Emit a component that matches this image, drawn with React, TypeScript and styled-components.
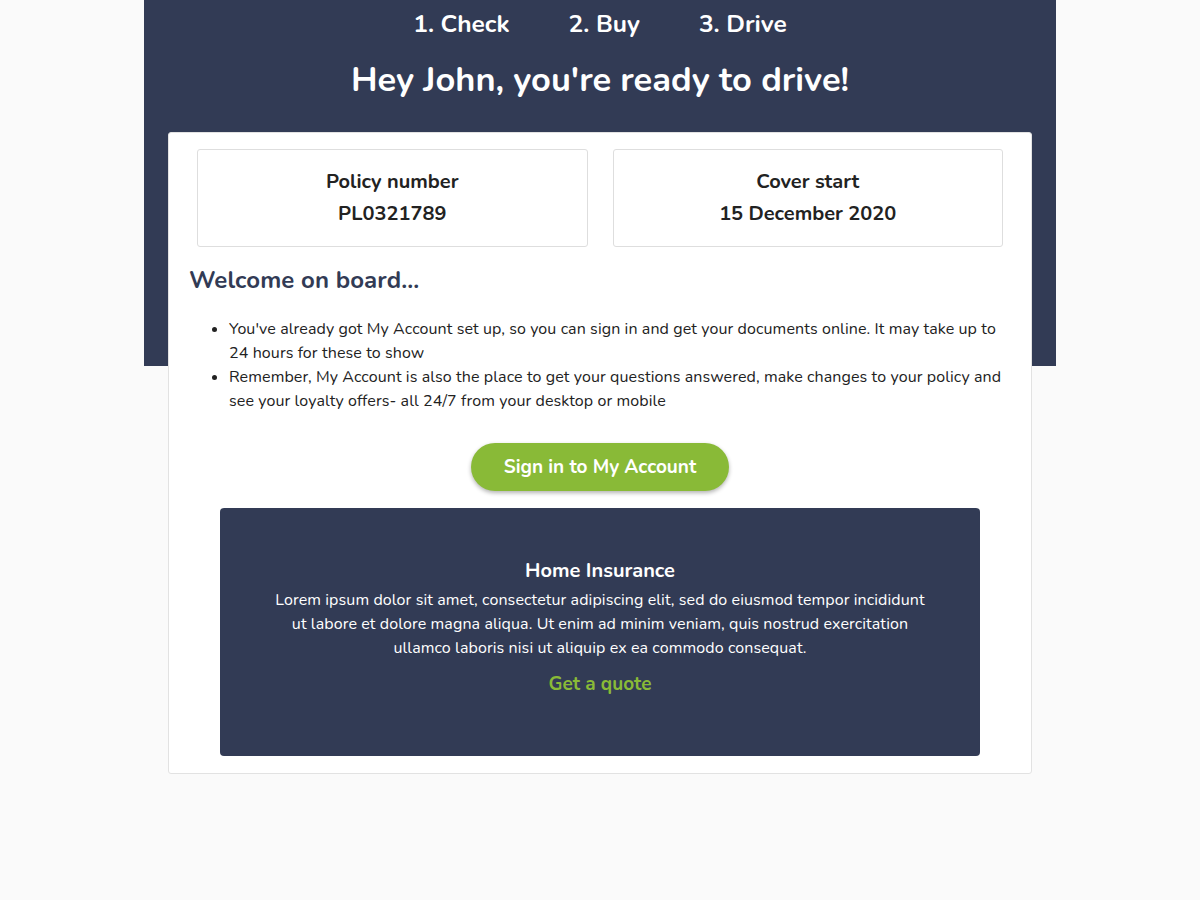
import React from "react";
import styled, { createGlobalStyle } from "styled-components";

const Global = createGlobalStyle`
  html, body { margin: 0; padding: 0; background: #fafafa; }
  body { font-family: "Nunito", Lato, "Open Sans", sans-serif; color: #222; }
  * { box-sizing: border-box; }
`;

const NAVY = "#323b55";
const GREEN = "#89ba37";

const Page = styled.div`
  width: 912px;
  margin: 0 auto;
  padding: 0 24px 40px;
  background: linear-gradient(${NAVY} 0, ${NAVY} 366px, transparent 366px);
`;

const Steps = styled.ol`
  list-style: none;
  margin: 0;
  padding: 8px 0 0;
  display: flex;
  justify-content: center;
  gap: 59px;
`;

const Step = styled.li`
  color: #fff;
  font-size: 24.5px;
  font-weight: 700;
  line-height: 32px;
`;

const Title = styled.h1`
  margin: 15px 0 0;
  color: #fff;
  text-align: center;
  font-size: 34.4px;
  font-weight: 700;
  line-height: 50px;
`;

const Card = styled.section`
  margin-top: 27px;
  background: #fff;
  border: 1px solid #e2e2e2;
  border-radius: 3px;
  padding: 16px 21px 16px;
`;

const InfoRow = styled.div`
  display: grid;
  grid-template-columns: 1fr 1fr;
  gap: 25px;
  padding: 0 7px;
`;

const InfoBox = styled.div`
  height: 98px;
  border: 1px solid #dedede;
  border-radius: 3px;
  display: flex;
  flex-direction: column;
  align-items: center;
  justify-content: center;
  gap: 2px;
`;

const InfoLabel = styled.div`
  font-size: 20px;
  font-weight: 700;
  line-height: 30px;
  color: #222;
`;

const Welcome = styled.h2`
  margin: 16px 0 0 -1px;
  font-size: 24px;
  letter-spacing: 0.1px;
  font-weight: 700;
  line-height: 34px;
  color: ${NAVY};
`;

const Bullets = styled.ul`
  margin: 20px 0 0;
  padding-left: 39px;
  font-size: 16px;
  letter-spacing: 0.1px;
  line-height: 24px;
  color: #222;
`;

const ButtonRow = styled.div`
  display: flex;
  justify-content: center;
  margin-top: 30px;
`;

const PrimaryButton = styled.button`
  width: 258px;
  height: 48px;
  border: none;
  border-radius: 24px;
  background: ${GREEN};
  color: #fff;
  font-family: inherit;
  font-size: 19px;
  font-weight: 700;
  box-shadow: 0 2px 4px rgba(0, 0, 0, 0.3);
  cursor: pointer;
`;

const Promo = styled.div`
  margin: 17px 30px 1px;
  height: 248px;
  background: ${NAVY};
  border-radius: 4px;
  display: flex;
  flex-direction: column;
  align-items: center;
  padding: 48px 50px 0;
  color: #fff;
  text-align: center;
`;

const PromoTitle = styled.h3`
  margin: 0;
  font-size: 20px;
  font-weight: 700;
  line-height: 30px;
`;

const PromoText = styled.p`
  margin: 2px 0 0;
  font-size: 16px;
  letter-spacing: 0.1px;
  line-height: 24px;
`;

const QuoteLink = styled.a`
  margin-top: 10px;
  color: ${GREEN};
  font-size: 19px;
  font-weight: 700;
  line-height: 28px;
  text-decoration: none;
`;

export default function App() {
  return (
    <>
      <Global />
      <Page>
        <Steps>
          <Step>1. Check</Step>
          <Step>2. Buy</Step>
          <Step>3. Drive</Step>
        </Steps>
        <Title>Hey John, you're ready to drive!</Title>
        <Card>
          <InfoRow>
            <InfoBox>
              <InfoLabel>Policy number</InfoLabel>
              <InfoLabel>PL0321789</InfoLabel>
            </InfoBox>
            <InfoBox>
              <InfoLabel>Cover start</InfoLabel>
              <InfoLabel>15 December 2020</InfoLabel>
            </InfoBox>
          </InfoRow>
          <Welcome>Welcome on board...</Welcome>
          <Bullets>
            <li>
              You've already got My Account set up, so you can sign in and get your documents online. It may take up to 24 hours for these to show
            </li>
            <li>
              Remember, My Account is also the place to get your questions answered, make changes to your policy and see your loyalty offers- all 24/7 from your desktop or mobile
            </li>
          </Bullets>
          <ButtonRow>
            <PrimaryButton>Sign in to My Account</PrimaryButton>
          </ButtonRow>
          <Promo>
            <PromoTitle>Home Insurance</PromoTitle>
            <PromoText>
              Lorem ipsum dolor sit amet, consectetur adipiscing elit, sed do eiusmod tempor incididunt ut labore et dolore magna aliqua. Ut enim ad minim veniam, quis nostrud exercitation ullamco laboris nisi ut aliquip ex ea commodo consequat.
            </PromoText>
            <QuoteLink href="#">Get a quote</QuoteLink>
          </Promo>
        </Card>
      </Page>
    </>
  );
}
